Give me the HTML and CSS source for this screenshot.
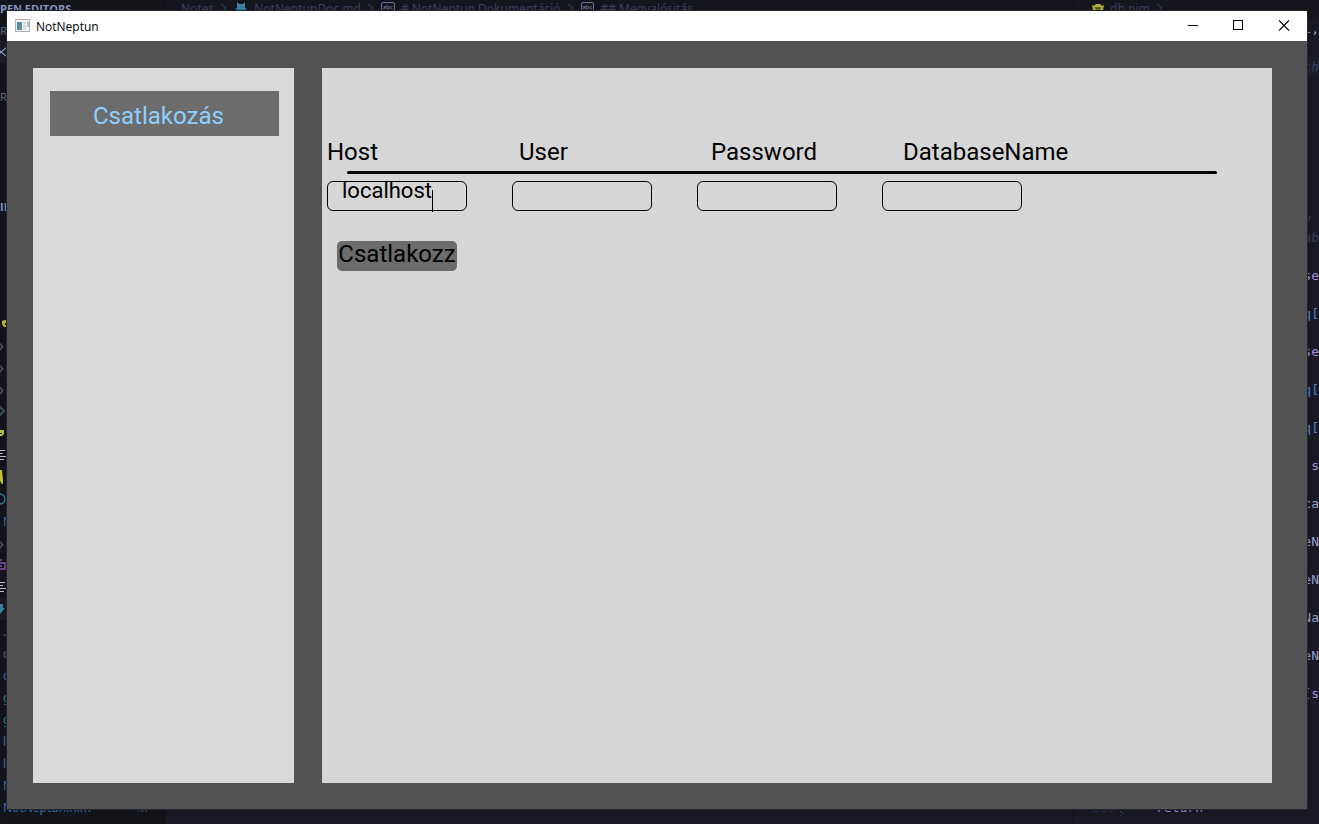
FILE: index.html
```html
<!DOCTYPE html>
<html lang="hu">
<head>
<meta charset="utf-8">
<title>NotNeptun</title>
<link rel="stylesheet" href="styles.css">
</head>
<body>
<div class="desktop">
  <aside class="explorer">
    <div class="row heading">PEN EDITORS</div>
    <div class="row heading dim">R</div>
    <div class="row active"><svg width="7" height="12" viewBox="0 0 7 12"><path d="M-3 2 1 6l-4 4M6 2 1 6l5 4" fill="none" stroke="#8f9ac4" stroke-width="1.4"/></svg></div>
    <div class="row"></div>
    <div class="row heading dim">R</div>
    <div class="spacer"></div>
    <div class="row heading">IM</div>
    <div class="outline">
      <div class="row mark">:</div><div class="row mark">:</div><div class="row mark">:</div><div class="row mark">:</div>
    </div>
    <div class="row"><svg width="8" height="12" viewBox="0 0 8 12"><path d="M8 3H5L2 4v3l2 3h4V8H5V6h3z" fill="#c5c838"/></svg></div>
    <div class="row chev">›</div>
    <div class="row chev">›</div>
    <div class="row chev">›</div>
    <div class="row"><svg width="7" height="12" viewBox="0 0 7 12"><path d="M-3 6 0 2l4 4-4 4z" fill="none" stroke="#3d5664" stroke-width="2"/></svg></div>
    <div class="row"><svg width="7" height="12" viewBox="0 0 7 12"><path d="M0 3h4v4L2 9H0V7h2V6H0z" fill="#c5c838"/></svg></div>
    <div class="row"><svg width="7" height="12" viewBox="0 0 7 12"><path d="M0 1.5h5M0 4.5h3M0 7.5h6M0 10.5h4" stroke="#c5c7ce" fill="none"/></svg></div>
    <div class="row"><svg width="7" height="16" viewBox="0 0 7 16"><path d="M0 1h2l1 10v4H2L0 12z" fill="#c5c838"/></svg></div>
    <div class="row"><svg width="7" height="12" viewBox="0 0 7 12"><circle cx="0" cy="6" r="5" fill="none" stroke="#3187a8" stroke-width="1.3"/></svg></div>
    <div class="row file">N</div>
    <div class="row chev">›</div>
    <div class="row"><svg width="7" height="12" viewBox="0 0 7 12"><path d="M0 1h2M0 4h5v6H0M0 7h2" fill="none" stroke="#8e55b5" stroke-width="1.4"/></svg></div>
    <div class="row"><svg width="7" height="12" viewBox="0 0 7 12"><path d="M0 1.5h5M0 4.5h3M0 7.5h6M0 10.5h4" stroke="#c5c7ce" fill="none"/></svg></div>
    <div class="row active"><svg width="7" height="12" viewBox="0 0 7 12"><path d="M0 1h3v4h2L0 11z" fill="#3b87a5"/></svg></div>
    <div class="row file">.g</div>
    <div class="row file gray">c</div>
    <div class="row file">c</div>
    <div class="row file green">g</div>
    <div class="row file green">g</div>
    <div class="row file">l</div>
    <div class="row file">l</div>
    <div class="row file">N</div>
    <div class="row file"><span class="grow">NotNeptun.nim</span><span class="status">M</span></div>
  </aside>
  <section class="editor">
    <nav class="crumbs">
      <span>Notes</span>
      <svg width="8" height="12" viewBox="0 0 8 12"><path d="m1 2 5 4-5 4" fill="none" stroke="#414868"/></svg>
      <svg class="file-icon" width="12" height="14" viewBox="0 0 12 14"><path d="M2 1l2 2h4l2-2v6h2l-6 6-6-6h2z" fill="#3b87a5"/></svg>
      <span>NotNeptunDoc.md</span>
      <svg width="8" height="12" viewBox="0 0 8 12"><path d="m1 2 5 4-5 4" fill="none" stroke="#414868"/></svg>
      <span class="abc">abc</span>
      <span># NotNeptun Dokumentáció</span>
      <svg width="8" height="12" viewBox="0 0 8 12"><path d="m1 2 5 4-5 4" fill="none" stroke="#414868"/></svg>
      <span class="abc">abc</span>
      <span>## Megvalósitás</span>
    </nav>
  </section>
  <section class="code">
    <nav class="crumbs nim">
      <svg width="12" height="12" viewBox="0 0 12 12"><path d="M0 3l2 1 2-2h4l2 2 2-1-1 6-2 2H3L1 9z" fill="#b4b735"/><path d="M3 6h6M4 8h4" stroke="#16161e"/></svg>
      <span>db.nim</span>
      <svg width="8" height="12" viewBox="0 0 8 12"><path d="m1 2 5 4-5 4" fill="none" stroke="#414868"/></svg>
    </nav>
    <div class="lines">
      <div class="line text">l,</div>
      <div class="line"></div>
      <div class="line comment lit">ch</div>
      <div class="gap"></div>
      <div class="line comment">y&nbsp;</div>
      <div class="line comment">ab</div>
      <div class="line"></div>
      <div class="line key">se</div><div class="line"></div>
      <div class="line blue">q[</div><div class="line"></div>
      <div class="line key">se</div><div class="line"></div>
      <div class="line blue">q[</div><div class="line"></div>
      <div class="line blue">q[</div><div class="line"></div>
      <div class="line key">&nbsp;s</div><div class="line"></div>
      <div class="line text">ca</div><div class="line"></div>
      <div class="line text">eN</div><div class="line"></div>
      <div class="line text">eN</div><div class="line"></div>
      <div class="line text">Na</div><div class="line"></div>
      <div class="line text">eN</div><div class="line"></div>
      <div class="line key">[s</div>
    </div>
    <div class="last"><span class="number">299</span><span class="change"></span><span class="key">return</span></div>
  </section>

  <main class="window">
    <header class="titlebar">
      <svg class="app-icon" width="15" height="13" viewBox="0 0 15 13"><rect x=".5" y=".5" width="14" height="12" fill="#f4f4f4" stroke="#aeb4b9"/><rect x="2" y="3" width="5" height="8" fill="#4f9a94"/><path d="M2 3h5v3L2 9z" fill="#5688b0"/><path d="M8 3h3v8H8z" fill="#dedede"/><path d="M12 3h2v5h-2z" fill="#a4c5d1"/></svg>
      <h1 class="title">NotNeptun</h1>
      <button class="control" aria-label="Minimize"><svg width="11" height="11" viewBox="0 0 11 11"><path d="M1 5.5h10" stroke="#000"/></svg></button>
      <button class="control" aria-label="Maximize"><svg width="11" height="11" viewBox="0 0 11 11"><rect x=".5" y=".5" width="9" height="9" fill="none" stroke="#000"/></svg></button>
      <button class="control" aria-label="Close"><svg width="11" height="11" viewBox="0 0 11 11"><path d="m0 .5 10 10m0-10-10 10" stroke="#000" stroke-width="1.1"/></svg></button>
    </header>
    <div class="body">
      <nav class="menu"><button class="menu-item">Csatlakozás</button></nav>
      <form class="panel">
        <div class="labels">
          <label for="host">Host</label>
          <label for="user">User</label>
          <label for="password">Password</label>
          <label for="database">DatabaseName</label>
        </div>
        <hr class="rule">
        <div class="fields">
          <div class="field"><input id="host" type="text" value="localhost"><span class="caret"></span></div>
          <div class="field"><input id="user" type="text"></div>
          <div class="field"><input id="password" type="password"></div>
          <div class="field"><input id="database" type="text"></div>
        </div>
        <button class="connect" type="button">Csatlakozz</button>
      </form>
    </div>
  </main>
</div>
</body>
</html>
```
FILE: styles.css
```css
* { box-sizing: border-box; }
body { margin: 0; background: #16161e; font-family: "Noto Sans", sans-serif; }
button, input { font: inherit; color: inherit; border: 0; margin: 0; }

.desktop {
  position: relative;
  display: grid;
  grid-template-columns: 165px 1fr 246px;
  height: 100vh;
  overflow: hidden;
}

.explorer {
  display: flex;
  flex-direction: column;
  margin-top: -3px;
  background: #15161c;
  border-right: 1px solid #101014;
  overflow: hidden;
}
.row {
  display: flex;
  align-items: center;
  flex: none;
  height: 22px;
  white-space: nowrap;
  font-size: 13px;
}
.row svg { flex: none; }
.heading { font: 700 11px "Open Sans", sans-serif; color: #8f9ac4; }
.dim { color: #6a7090; font-weight: 400; }
.active { background: #1c1d29; }
.spacer { height: 88px; border-bottom: 1px solid #101014; }
.outline { padding-top: 7px; }
.mark { padding-left: 5px; color: #27395e; }
.chev { color: #626880; text-indent: -1px; font-size: 16px; }
.file { padding: 0 16px 0 3px; color: #3f75bb; font-size: 12px; }
.gray { color: #686b78; }
.green { color: #2b8f97; }
.grow { flex: 1; }
.status { color: #35517f; }

.editor { background: #1a1b26; }
.crumbs {
  display: flex;
  align-items: center;
  gap: 6px;
  height: 22px;
  margin-top: -3px;
  padding-left: 16px;
  background: #16161e;
  color: #3e4565;
  font-size: 12px;
  white-space: nowrap;
}
.file-icon { margin: 0 1px; }
.abc {
  height: 12px;
  padding: 0 1px;
  border: 1px solid #6771a0;
  border-radius: 2px;
  font-size: 6px;
  line-height: 9px;
  color: #9099bd;
}
.code {
  display: flex;
  flex-direction: column;
  background: #1a1b26;
  border-left: 1px solid #101014;
  font-family: "DejaVu Sans Mono", monospace;
  font-size: 13px;
}
.nim { padding-left: 18px; font-family: "Noto Sans", sans-serif; }
.lines { flex: 1; text-align: right; }
.line { height: 19px; line-height: 19px; }
.gap { height: 133px; }
.text { color: #98a6da; }
.comment { color: #3b4262; font-style: italic; }
.lit { background: #1e1f2d; }
.key { color: #ac92ea; }
.blue { color: #4f88d4; }
.last { display: flex; align-items: center; height: 26px; line-height: 19px; padding: 0 0 8px 18px; }
.number { color: #2b3047; width: 28px; }
.change { width: 3px; height: 18px; margin-right: 33px; background: repeating-linear-gradient(45deg, #30517d 0 1px, #1a1b26 1px 3px); }

.window {
  position: absolute;
  inset: 11px 12px 15px 7px;
  display: flex;
  flex-direction: column;
  background: #525252;
  box-shadow: 0 0 0 1px #26272c, 0 2px 12px #0004;
}
.titlebar { display: flex; align-items: center; height: 30px; padding-left: 8px; background: #fff; color: #000; }
.app-icon { margin-bottom: 2px; }
.title { flex: 1; margin: 0 0 0 6px; font: 400 12px "Open Sans", sans-serif; }
.control { display: grid; place-items: center; width: 46px; height: 30px; padding: 0 0 2px; background: none; }

.body {
  flex: 1;
  display: grid;
  grid-template-columns: 261px 1fr;
  gap: 28px;
  padding: 27px 35px 26px 26px;
  font-family: Roboto, sans-serif;
  font-size: 24px;
  color: #000;
}
.menu { padding: 23px 15px 0 17px; background: #d9d9d9; }
.menu-item { display: block; width: 100%; height: 45px; padding: 4px 0 0 43px; background: #6c6c6c; color: #8fcfff; text-align: left; line-height: 28px; }
.panel { padding: 70px 0 0 5px; background: #d6d6d6; }
.labels { display: grid; grid-template-columns: repeat(4, 192px); line-height: 28px; }
.rule { height: 3px; margin: 5px 55px 7px 20px; border: 0; border-radius: 2px; background: #000; }
.fields { display: flex; gap: 45px; }
.field { position: relative; width: 140px; height: 30px; }
.field input {
  display: block;
  width: 100%;
  height: 100%;
  padding: 0 14px 12px;
  border: 1px solid #000;
  border-radius: 6px;
  background: none;
  font-size: 22px;
  line-height: 18px;
  outline: 0;
}
.caret { position: absolute; left: 105px; top: 9px; width: 1px; height: 22px; background: #000; }
.connect { display: flex; align-items: center; justify-content: center; width: 120px; height: 30px; margin: 30px 0 0 10px; padding: 0 0 4px; border-radius: 5px; background: #6c6c6c; line-height: 26px; }
```
